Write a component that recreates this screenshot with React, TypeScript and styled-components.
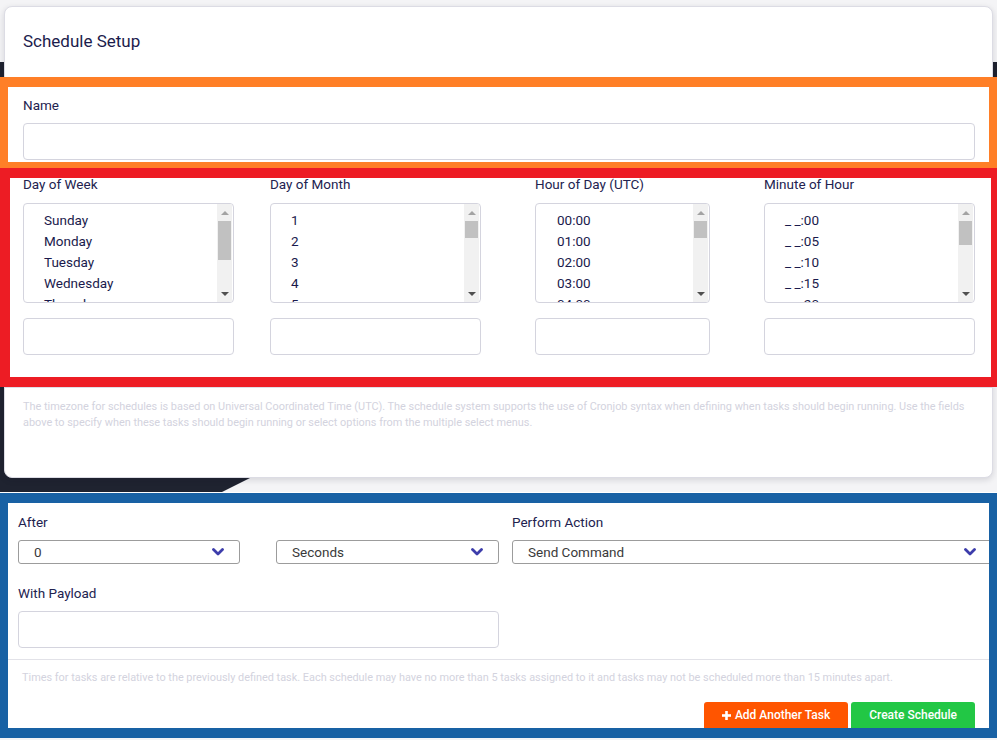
import React from "react";
import styled, { createGlobalStyle } from "styled-components";

const GlobalStyle = createGlobalStyle`
  html, body { margin: 0; padding: 0; }
  body {
    background: #f4f4f6;
    font-family: Roboto, "Liberation Sans", Arial, sans-serif;
    overflow: hidden;
  }
  * { box-sizing: border-box; }
`;

const Page = styled.div`
  position: relative;
  width: 997px;
  height: 740px;
  overflow: hidden;
  background: #f4f4f6;
  &::before {
    content: "";
    position: absolute;
    left: 0;
    top: 0;
    width: 997px;
    height: 740px;
    background: #1f2330;
    clip-path: polygon(0 62px, 997px 62px, 997px 104px, 222px 492px, 0 492px);
  }
`;

const TopArea = styled.div`
  position: relative;
  padding: 6px 4px 0 4px;
  height: 492px;
`;

const Card = styled.section`
  height: 472px;
  background: #fff;
  border: 1px solid #dcdce4;
  border-radius: 8px;
  box-shadow: 0 2px 6px rgba(20, 20, 40, 0.14);
  display: flex;
  flex-direction: column;
`;

const CardHeader = styled.header`
  padding: 24px 18px 31px 18px;
  border-bottom: 1px solid #e4e4ec;
`;

const Title = styled.h2`
  margin: 0;
  font-size: 17px;
  line-height: 20px;
  font-weight: 400;
  color: #1c1c4c;
`;

const CardBody = styled.div`
  padding: 14px 17px 32px 18px;
  border-bottom: 1px solid #dedee6;
`;

const Label = styled.div`
  font-size: 13.5px;
  line-height: 16px;
  color: #22224f;
  margin-bottom: 10px;
`;

const TextInput = styled.div<{ $w?: number }>`
  height: 37px;
  width: ${(p) => (p.$w ? `${p.$w}px` : "100%")};
  border: 1px solid #d4d4de;
  border-radius: 4px;
  background: #fff;
`;

const ScheduleGrid = styled.div`
  display: grid;
  grid-template-columns: 247px 265px 229px 1fr;
  margin-top: 16px;
`;

const Field = styled.div<{ $w: number }>`
  width: ${(p) => p.$w}px;
  display: flex;
  flex-direction: column;
`;

const FieldLabel = styled(Label)`
  margin-bottom: 11px;
`;

const ListBox = styled.div`
  height: 100px;
  border: 1px solid #d4d4de;
  border-radius: 4px;
  display: flex;
  overflow: hidden;
  margin-bottom: 15px;
  background: #fff;
`;

const Options = styled.div<{ $pad: number }>`
  flex: 1;
  padding: 6px 0 0 ${(p) => p.$pad}px;
  overflow: hidden;
`;

const Option = styled.div`
  font-size: 13.5px;
  line-height: 21px;
  color: #1a1a4c;
  white-space: nowrap;
`;

const Track = styled.div`
  width: 15px;
  margin: 0 1px 0 0;
  background: #f1f1f1;
  display: flex;
  flex-direction: column;
`;

const ArrowCell = styled.div`
  height: 17px;
  display: flex;
  align-items: center;
  justify-content: center;
`;

const UpTri = styled.div`
  width: 0;
  height: 0;
  border-left: 4px solid transparent;
  border-right: 4px solid transparent;
  border-bottom: 4px solid #a3a3a3;
`;

const DownTri = styled.div`
  width: 0;
  height: 0;
  border-left: 4px solid transparent;
  border-right: 4px solid transparent;
  border-top: 4px solid #505050;
`;

const Thumb = styled.div<{ $h: number }>`
  height: ${(p) => p.$h}px;
  margin: 0 1px;
  background: #c1c1c1;
`;

const Spacer = styled.div`
  flex: 1;
`;

const HelpText = styled.p`
  margin: 0;
  padding: 11px 6px 0 18px;
  font-size: 10.9px;
  line-height: 16px;
  color: #d3d3de;
`;

const TaskPanel = styled.section`
  position: relative;
  height: 246px;
  background: #fff;
  border-bottom: 1px solid #dcdce2;
  display: flex;
  flex-direction: column;
`;

const TaskBody = styled.div`
  padding: 22px 5px 11px 18px;
  border-bottom: 1px solid #e2e2e8;
`;

const TaskGrid = styled.div`
  display: grid;
  grid-template-columns: 481px 1fr;
  column-gap: 13px;
`;

const SelectRow = styled.div`
  display: grid;
  grid-template-columns: 222px 223px;
  justify-content: space-between;
`;

const SelectBox = styled.div`
  height: 24px;
  border: 1px solid #9c9c9c;
  border-radius: 3px;
  padding: 0 15px 0 15px;
  display: flex;
  align-items: center;
  justify-content: space-between;
  font-size: 13.5px;
  color: #3a3a3a;
  background: #fff;
`;

const PayloadLabel = styled(Label)`
  margin-top: 21px;
`;

const Footer = styled.div`
  padding: 10px 23px 0 22px;
  display: flex;
  flex-direction: column;
`;

const FooterText = styled.p`
  margin: 0;
  font-size: 10.9px;
  line-height: 16px;
  color: #d3d3de;
`;

const ButtonRow = styled.div`
  display: flex;
  justify-content: flex-end;
  gap: 3px;
  margin-top: 16px;
  margin-right: -1px;
`;

const Button = styled.button<{ $color: string }>`
  height: 32px;
  padding: 4px 18px 10px 18px;
  border: none;
  border-radius: 3px;
  background: ${(p) => p.$color};
  color: #fff;
  font-family: Roboto, "Liberation Sans", Arial, sans-serif;
  font-size: 12px;
  font-weight: 500;
  line-height: 18px;
  display: flex;
  align-items: center;
  gap: 4px;
`;

const Annotation = styled.div<{ $color: string; $top: number; $left: number; $w: number; $h: number }>`
  position: absolute;
  top: ${(p) => p.$top}px;
  left: ${(p) => p.$left}px;
  width: ${(p) => p.$w}px;
  height: ${(p) => p.$h}px;
  border: 10px solid ${(p) => p.$color};
  pointer-events: none;
`;

const Chevron = () => (
  <svg width="12" height="8" viewBox="0 0 12 8">
    <polyline points="1.5,1.5 6,6 10.5,1.5" fill="none" stroke="#3d3dab" strokeWidth="2.8" strokeLinecap="round" strokeLinejoin="round" />
  </svg>
);

const PlusIcon = () => (
  <svg width="9" height="9" viewBox="0 0 9 9">
    <rect x="3.2" y="0" width="2.6" height="9" fill="#fff" />
    <rect x="0" y="3.2" width="9" height="2.6" fill="#fff" />
  </svg>
);

type ListProps = { items: string[]; thumb: number; pad: number };

const MultiList = ({ items, thumb, pad }: ListProps) => (
  <ListBox>
    <Options $pad={pad}>
      {items.map((it) => (
        <Option key={it}>{it}</Option>
      ))}
    </Options>
    <Track>
      <ArrowCell>
        <UpTri />
      </ArrowCell>
      <Thumb $h={thumb} />
      <Spacer />
      <ArrowCell>
        <DownTri />
      </ArrowCell>
    </Track>
  </ListBox>
);

const pad2 = (n: number) => (n < 10 ? `0${n}` : `${n}`);

const days = ["Sunday", "Monday", "Tuesday", "Wednesday", "Thursday", "Friday", "Saturday"];
const monthDays = Array.from({ length: 31 }, (_, i) => `${i + 1}`);
const hours = Array.from({ length: 24 }, (_, i) => `${pad2(i)}:00`);
const minutes = Array.from({ length: 12 }, (_, i) => `_ _:${pad2(i * 5)}`);

const columns = [
  { label: "Day of Week", items: days, thumb: 39, w: 211, pad: 20 },
  { label: "Day of Month", items: monthDays, thumb: 17, w: 211, pad: 20 },
  { label: "Hour of Day (UTC)", items: hours, thumb: 17, w: 175, pad: 21 },
  { label: "Minute of Hour", items: minutes, thumb: 24, w: 211, pad: 20 },
];

export default function App() {
  return (
    <Page>
      <GlobalStyle />
      <TopArea>
        <Card>
          <CardHeader>
            <Title>Schedule Setup</Title>
          </CardHeader>
          <CardBody>
            <Label>Name</Label>
            <TextInput />
            <ScheduleGrid>
              {columns.map((c) => (
                <Field key={c.label} $w={c.w}>
                  <FieldLabel>{c.label}</FieldLabel>
                  <MultiList items={c.items} thumb={c.thumb} pad={c.pad} />
                  <TextInput />
                </Field>
              ))}
            </ScheduleGrid>
          </CardBody>
          <HelpText>
            The timezone for schedules is based on Universal Coordinated Time (UTC). The schedule system supports the use
            of Cronjob syntax when defining when tasks should begin running. Use the fields above to specify when these
            tasks should begin running or select options from the multiple select menus.
          </HelpText>
        </Card>
      </TopArea>
      <TaskPanel>
        <TaskBody>
          <TaskGrid>
            <div>
              <Label>After</Label>
              <SelectRow>
                <SelectBox>
                  <span>0</span>
                  <Chevron />
                </SelectBox>
                <SelectBox>
                  <span>Seconds</span>
                  <Chevron />
                </SelectBox>
              </SelectRow>
              <PayloadLabel>With Payload</PayloadLabel>
              <TextInput />
            </div>
            <div>
              <Label>Perform Action</Label>
              <SelectBox>
                <span>Send Command</span>
                <Chevron />
              </SelectBox>
            </div>
          </TaskGrid>
        </TaskBody>
        <Footer>
          <FooterText>
            Times for tasks are relative to the previously defined task. Each schedule may have no more than 5 tasks
            assigned to it and tasks may not be scheduled more than 15 minutes apart.
          </FooterText>
          <ButtonRow>
            <Button $color="#ff5500">
              <PlusIcon />
              Add Another Task
            </Button>
            <Button $color="#22c745">Create Schedule</Button>
          </ButtonRow>
        </Footer>
      </TaskPanel>
      <Annotation $color="#ff7f27" $top={77} $left={-2} $w={1001} $h={95} />
      <Annotation $color="#ed1c24" $top={168} $left={0} $w={1001} $h={219} />
      <Annotation $color="#1861a4" $top={493} $left={-2} $w={1001} $h={245} />
    </Page>
  );
}
